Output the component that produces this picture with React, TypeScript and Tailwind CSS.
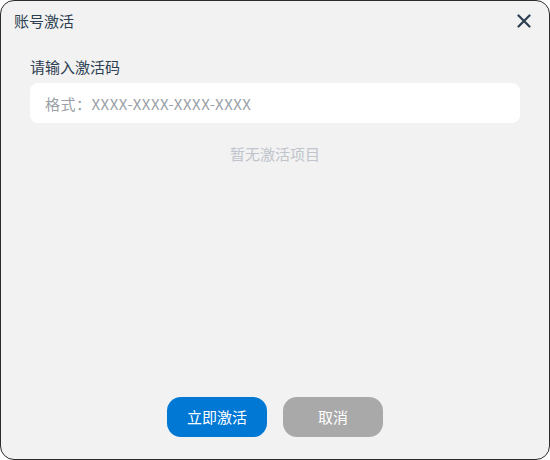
import React, { useState } from 'react';

const FONT = "font-['Noto_Sans_CJK_SC',sans-serif]";

function App() {
  const [code, setCode] = useState('');

  return (
    <div className={`w-[550px] h-[460px] bg-white ${FONT}`}>
      <div className="w-full h-full flex flex-col bg-[#f2f2f2] border border-[#2b2b2b] rounded-[14px] overflow-hidden">
        {/* Header */}
        <div className="flex items-center justify-between h-[40px] pl-[13px] pr-[16px]">
          <span className="text-[15px] text-[#2c3e50]">账号激活</span>
          <button className="w-[18px] h-[18px] flex items-center justify-center text-[#2c3e50]">
            <svg width="14" height="14" viewBox="0 0 14 14" fill="none">
              <path d="M1.5 1.5L12.5 12.5M12.5 1.5L1.5 12.5" stroke="currentColor" strokeWidth="2.2" strokeLinecap="round" />
            </svg>
          </button>
        </div>

        {/* Body */}
        <div className="flex-1 flex flex-col px-[29px] pt-[16px]">
          <label className="text-[15px] text-[#2c3e50] leading-[20px] mb-[6px]">请输入激活码</label>
          <input
            value={code}
            onChange={e => setCode(e.target.value)}
            placeholder="格式：XXXX-XXXX-XXXX-XXXX"
            className="h-[40px] w-full bg-white rounded-[8px] px-[15px] text-[15px] tracking-[0.5px] text-[#2c3e50] placeholder:text-[#9aa0a6] outline-none"
          />
          <p className="mt-[20px] text-center text-[15px] text-[#c0c4cc]">暂无激活项目</p>
        </div>

        {/* Footer */}
        <div className="flex justify-center gap-[16px] pb-[22px]">
          <button className="w-[100px] h-[40px] rounded-[14px] bg-[#0078d4] text-white text-[15px]">立即激活</button>
          <button className="w-[100px] h-[40px] rounded-[14px] bg-[#a9a9a9] text-white text-[15px]">取消</button>
        </div>
      </div>
    </div>
  );
}

export default App;
